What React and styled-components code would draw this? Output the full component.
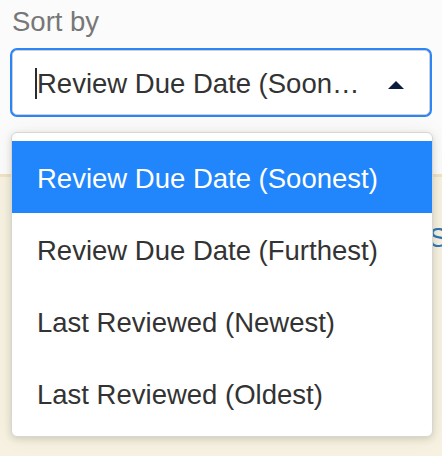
import React from "react";
import styled, { createGlobalStyle } from "styled-components";

const Global = createGlobalStyle`
  html, body { margin: 0; padding: 0; }
  body {
    background: #fbfbfb;
    font-family: "Liberation Sans", Arial, Helvetica, sans-serif;
    overflow: hidden;
  }
`;

const Page = styled.div`
  position: relative;
  width: 442px;
  height: 456px;
  overflow: hidden;
  display: flex;
  flex-direction: column;
`;

const Top = styled.div`
  padding: 5px 10px 0 10px;
  height: 174px;
  box-sizing: border-box;
`;

const Label = styled.div`
  font-size: 27.5px;
  line-height: 34px;
  color: #777777;
  padding-left: 2px;
`;

const Select = styled.div`
  margin: 11px 2px 0 2px;
  height: 65px;
  box-sizing: border-box;
  border: 1px solid #cfcfcf;
  border-radius: 5px;
  box-shadow: 0 0 0 2px #2a85f7;
  background: #ffffff;
  display: flex;
  align-items: center;
  padding: 0 25px 0 22px;
`;

const Caret = styled.span`
  flex: none;
  width: 2px;
  height: 31px;
  margin-top: 2px;
  background: #2b2b2b;
`;

const Value = styled.span`
  flex: 1;
  min-width: 0;
  white-space: nowrap;
  overflow: hidden;
  text-overflow: ellipsis;
  font-size: 27.5px;
  line-height: 34px;
  color: #333333;
  margin-top: 2px;
`;

const Arrow = styled.svg`
  flex: none;
  margin-left: 24px;
  margin-top: 4px;
`;

const Panel = styled.div`
  flex: 1;
  background: #f6f1e0;
  border-top: 3px solid #efe3c4;
  display: grid;
  grid-template-columns: 419px auto;
  column-gap: 10px;
  padding-top: 44px;
  overflow: hidden;
`;

const Link = styled.span`
  grid-column: 2;
  font-size: 27.5px;
  line-height: 34px;
  color: #2f74b5;
  white-space: nowrap;
`;

const Menu = styled.ul`
  position: absolute;
  top: 132px;
  left: 11px;
  width: 422px;
  box-sizing: border-box;
  margin: 0;
  padding: 8px 0 7px 0;
  list-style: none;
  background: #ffffff;
  border: 1px solid #d6d6d6;
  border-radius: 6px;
  box-shadow: 0 2px 6px rgba(120, 110, 80, 0.25), 0 0 24px rgba(0, 0, 0, 0.05);
`;

const Item = styled.li`
  height: 72px;
  box-sizing: border-box;
  display: flex;
  align-items: center;
  padding: 4px 0 0 25px;
  font-size: 27.5px;
  line-height: 34px;
  color: ${(p) => (p.$active ? "#ffffff" : "#333333")};
  background: ${(p) => (p.$active ? "#2185fb" : "transparent")};
`;

const options = [
  "Review Due Date (Soonest)",
  "Review Due Date (Furthest)",
  "Last Reviewed (Newest)",
  "Last Reviewed (Oldest)",
];

export default function App() {
  return (
    <Page>
      <Global />
      <Top>
        <Label>Sort by</Label>
        <Select>
          <Caret />
          <Value>Review Due Date (Soonest)</Value>
          <Arrow width="16" height="8" viewBox="0 0 16 8">
            <polygon points="0,8 8,0 16,8" fill="#0b1d3f" />
          </Arrow>
        </Select>
      </Top>
      <Panel>
        <Link>Show all</Link>
      </Panel>
      <Menu>
        {options.map((o, i) => (
          <Item key={o} $active={i === 0}>
            {o}
          </Item>
        ))}
      </Menu>
    </Page>
  );
}
